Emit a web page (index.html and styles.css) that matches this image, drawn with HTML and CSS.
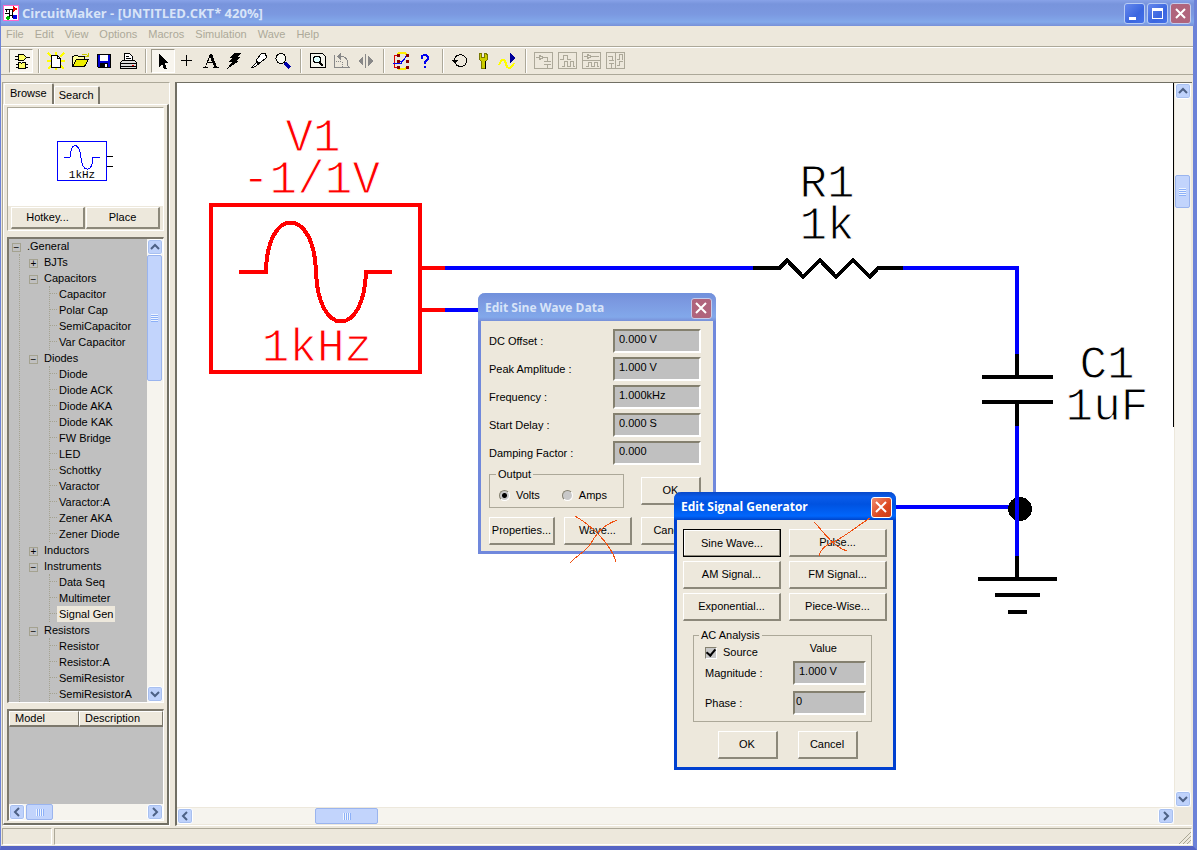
FILE: index.html
```html
<!DOCTYPE html>
<html lang="en">
<head>
<meta charset="utf-8">
<title>CircuitMaker - [UNTITLED.CKT* 420%]</title>
<link rel="stylesheet" href="styles.css">
</head>
<body>
<div class="app">
  <header class="titlebar">
    <svg class="app-icon" width="16" height="16" viewBox="0 0 16 16" shape-rendering="crispEdges"><rect x=".5" y=".5" width="15" height="15" fill="#fff" stroke="#f6c"/><path d="M2 4h8M2 8h4v-4M6 8v5M6 10h3v2h2M9 4v8M3 4v3" stroke="#000" fill="none"/><path d="M10 1l5 3-5 3z" fill="#e00"/><circle cx="12" cy="12" r="2.500" fill="#00d"/><circle cx="5" cy="13" r="1.800" fill="#0b0"/></svg>
    <h1 class="title">CircuitMaker - [UNTITLED.CKT* 420%]</h1>
    <div class="win-buttons">
      <button class="win-btn" aria-label="Minimize"><svg width="19" height="19" viewBox="0 0 19 19"><path d="M4 13h7v3H4z" fill="#fff"/></svg></button>
      <button class="win-btn" aria-label="Maximize"><svg width="19" height="19" viewBox="0 0 19 19"><path d="M4 4h11v11H4zM5 7v7h9V7z" fill="#fff" fill-rule="evenodd"/></svg></button>
      <button class="win-btn close dim" aria-label="Close"><svg width="19" height="19" viewBox="0 0 19 19"><path d="M5 5l9 9M14 5l-9 9" stroke="#fff" stroke-width="2"/></svg></button>
    </div>
  </header>

  <nav class="menubar">
    <button>File</button><button>Edit</button><button>View</button><button>Options</button><button>Macros</button><button>Simulation</button><button>Wave</button><button>Help</button>
  </nav>

  <div class="toolbar">
    <button class="tool pressed" aria-label="Parts"><svg viewBox="0 0 24 24"><path d="M6 7h4M6 10h4M17 8.500h4M7 15h12M7 18h12" stroke="#000"/><path d="M9.500 5.500h5l3 3-3 3h-5z" fill="#ff6" stroke="#000"/><path d="M9.500 13.500h2l1 1 1-1h3v6h-7z" fill="#ff6" stroke="#000"/></svg></button>
    <span class="sep"></span>
    <button class="tool" aria-label="New"><svg viewBox="0 0 24 24"><path d="M4 4l4 4M12 3v4M20 4l-4 4M3 12h4M17 12h4M4 20l4-4M20 20l-4-4M12 18v3" stroke="#ff0" stroke-width="2"/><path d="M7.500 6.500h6l3 3v9h-9z" fill="#fff" stroke="#000"/><path d="M13.500 6.500v3h3" fill="none" stroke="#000"/></svg></button>
    <button class="tool" aria-label="Open"><svg viewBox="0 0 24 24"><path d="M4.500 17.500v-10h1l1-1h3l1 1h6v3" fill="#ff9" stroke="#000"/><path d="M4.500 17.500l4-7h12l-4 7z" fill="#ee0" stroke="#000"/><path d="M14 5h4l2 2M20 4v3h-3" fill="none" stroke="#cc0"/></svg></button>
    <button class="tool" aria-label="Save"><svg viewBox="0 0 24 24"><path d="M5.500 5.500h13v13h-12l-1-1z" fill="#00c" stroke="#000"/><path d="M8 6h8v6H8z" fill="#fff"/><path d="M8 14h8v5H8z" fill="#000"/><path d="M13 15h2v3h-2z" fill="#fff"/></svg></button>
    <button class="tool" aria-label="Print"><svg viewBox="0 0 24 24"><path d="M8.500 11.500v-7h5l3 3v4" fill="#fff" stroke="#000"/><path d="M10 7h3M10 9h5" stroke="#000"/><path d="M6.500 11.500h12l2 2v6h-16v-6z" fill="#ddd" stroke="#000"/><path d="M4 14.500h16M4 17.500h16" stroke="#000"/><path d="M16 16h2" stroke="#e00"/></svg></button>
    <span class="sep"></span>
    <button class="tool pressed" aria-label="Arrow"><svg viewBox="0 0 24 24"><path d="M8 5v13l3-3 2 5h3l-2-6h4z" fill="#000"/></svg></button>
    <button class="tool" aria-label="Wire"><svg viewBox="0 0 24 24"><path d="M6 11.500h11M11.500 6v11" stroke="#000"/></svg></button>
    <button class="tool" aria-label="Text"><svg viewBox="0 0 24 24"><path d="M11 5h2l5 13h2v1h-6v-1h1l-1-4H8l-1 4h2v1H4v-1h2zM11 8l-2 5h4z" fill="#000" fill-rule="evenodd"/></svg></button>
    <button class="tool" aria-label="Delete"><svg viewBox="0 0 24 24"><path d="M11 4h8l-5 4h4l-5 4h3L4 20l5-7H5l4-4H7z" fill="#000"/></svg></button>
    <button class="tool" aria-label="Probe"><svg viewBox="0 0 24 24"><path d="M4.500 18.500l6-6 2 2-6 4zM9.500 10.500l5-6 4 0 1 4-6 5-3 1-1-2z" fill="#fff" stroke="#000"/></svg></button>
    <button class="tool" aria-label="Zoom"><svg viewBox="0 0 24 24"><path d="M14 14l5 5" stroke="#00a" stroke-width="3"/><circle cx="10" cy="9.500" r="5" fill="#f8f8f0" stroke="#000"/></svg></button>
    <span class="sep"></span>
    <button class="tool" aria-label="Fit"><svg viewBox="0 0 24 24"><path d="M4.500 4.500h12l3 3v11h-15z" fill="#f4f4ec" stroke="#000"/><circle cx="11" cy="10.500" r="3.500" fill="#dff" stroke="#000"/><path d="M13 13l4 4" stroke="#000" stroke-width="2"/></svg></button>
    <button class="tool" aria-label="Rotate"><svg viewBox="0 0 24 24"><path d="M4.500 6v12.500h15M8 7.500h5c3 1 5 4 5 9v2" stroke="#888" fill="none"/><path d="M11 4v7l-4-3.500z" fill="#888"/><path d="M6 12.500h6v6" stroke="#888" stroke-dasharray="1" fill="none"/></svg></button>
    <button class="tool" aria-label="Mirror"><svg viewBox="0 0 24 24"><path d="M4 12l5-5v10zM19 12l-5-5v10z" fill="#888"/><path d="M11.500 5v14" stroke="#888"/></svg></button>
    <span class="sep"></span>
    <button class="tool" aria-label="Digital display"><svg viewBox="0 0 24 24"><path d="M8 6l2-2h6l2 2M8 18l2 2h6l2-2" stroke="#fe0" stroke-width="2" fill="none"/><path d="M9 6.500H5.500v12h4" stroke="#d00" fill="none"/><path d="M4 14.500h8l6-8M10 12.500h3l5-6" stroke="#00e" fill="none"/><path d="M8 5h3v3H8zM17 5h3v3h-3zM8 11h3v3H8zM17 11h3v3h-3zM8 17h3v3H8zM17 17h3v3h-3z" fill="#800"/></svg></button>
    <button class="tool" aria-label="Help"><svg viewBox="0 0 24 24"><path d="M9 10V7l2-1h2l2 2v2l-3 3v2M12 17v2" stroke="#00e" stroke-width="2" fill="none"/></svg></button>
    <span class="sep"></span>
    <button class="tool" aria-label="Reset"><svg viewBox="0 0 24 24"><path d="M6.500 11c0-7 12-7 12 .500s-9 7-11 3" stroke="#000" fill="none"/><path d="M3 11h7l-3 4z" fill="#000"/></svg></button>
    <button class="tool" aria-label="Setup"><svg viewBox="0 0 24 24"><path d="M7.500 4.500h2v4h3v-4h2l1 2v4l-2 2v7h-4v-7l-2-2v-4z" fill="#cc0" stroke="#770"/><path d="M13.500 12v8" stroke="#000"/></svg></button>
    <button class="tool" aria-label="Run"><svg viewBox="0 0 24 24"><path d="M3 16c3-8 6-5 7-1s4 7 8-1" stroke="#ff0" stroke-width="2" fill="none"/><path d="M14 4l6 5-6 5z" fill="#009"/></svg></button>
    <span class="sep"></span>
    <button class="tool off" aria-label="Schematic" disabled><svg viewBox="0 0 24 24"><path d="M3.500 3.500h18v16h-18zM5 8.500h3M8.500 6.500v4l4-2zM12 8.500h4v4M13 12.500h7M13 15.500h7M16.500 15v4"/></svg></button>
    <button class="tool off" aria-label="Waveforms" disabled><svg viewBox="0 0 24 24"><path d="M3.500 3.500h18v16h-18zM5 10.500h3v-4h4v4h4M7 17.500h2v-5h3v5h3v-5h3v5h2"/></svg></button>
    <button class="tool off" aria-label="Split horizontal" disabled><svg viewBox="0 0 24 24"><path d="M3.500 3.500h18v16h-18zM5 7.500h3M8.500 5.500v4l4-2zM12 7.500h8M3 11.500h18M7 17.500h2v-4h3v4h3v-4h3v4h2"/></svg></button>
    <button class="tool off" aria-label="Split vertical" disabled><svg viewBox="0 0 24 24"><path d="M3.500 3.500h18v16h-18zM12.500 3v16M5 7.500h4v4M6 11.500h5M6 14.500h5M8.500 15v4M14 10.500h2v-5h3v5M14 16.500h2v-4h4"/></svg></button>
  </div>

  <main class="workspace">
    <aside class="side">
      <div class="tabs" role="tablist">
        <button class="tab active" role="tab" aria-selected="true">Browse</button><button class="tab" role="tab" aria-selected="false">Search</button>
      </div>
      <div class="tab-page">
        <section class="preview">
          <div class="preview-view">
            <svg width="58" height="42" viewBox="0 0 58 42"><g fill="none" shape-rendering="crispEdges"><path d="M.5 1.500h49v39H.5z" stroke="#00f"/><path d="M7 17.500h6c1-16 9-16 11 0s11 15 12 0h7" stroke="#00f"/><path d="M50 16.500h6M50 26.500h6" stroke="#000"/></g><text class="part-label" x="25" y="38" text-anchor="middle">1kHz</text></svg>
          </div>
          <div class="preview-actions"><button class="btn">Hotkey...</button><button class="btn">Place</button></div>
        </section>

        <section class="tree-box">
          <ul class="tree">
            <li class="node"><span class="box">−</span>.General
              <ul>
                <li class="node"><span class="box">+</span>BJTs</li>
                <li class="node"><span class="box">−</span>Capacitors
                  <ul><li class="leaf">Capacitor</li><li class="leaf">Polar Cap</li><li class="leaf">SemiCapacitor</li><li class="leaf">Var Capacitor</li></ul></li>
                <li class="node"><span class="box">−</span>Diodes
                  <ul><li class="leaf">Diode</li><li class="leaf">Diode ACK</li><li class="leaf">Diode AKA</li><li class="leaf">Diode KAK</li><li class="leaf">FW Bridge</li><li class="leaf">LED</li><li class="leaf">Schottky</li><li class="leaf">Varactor</li><li class="leaf">Varactor:A</li><li class="leaf">Zener AKA</li><li class="leaf">Zener Diode</li></ul></li>
                <li class="node"><span class="box">+</span>Inductors</li>
                <li class="node"><span class="box">−</span>Instruments
                  <ul><li class="leaf">Data Seq</li><li class="leaf">Multimeter</li><li class="leaf"><span class="selected">Signal Gen</span></li></ul></li>
                <li class="node"><span class="box">−</span>Resistors
                  <ul><li class="leaf">Resistor</li><li class="leaf">Resistor:A</li><li class="leaf">SemiResistor</li><li class="leaf">SemiResistorA</li></ul></li>
              </ul>
            </li>
          </ul>
          <div class="scroll vertical">
            <button class="scroll-btn" aria-label="Scroll up"><svg viewBox="0 0 16 16"><path d="M4 10l4-4 4 4"/></svg></button>
            <div class="track"><div class="thumb tree-thumb"></div></div>
            <button class="scroll-btn" aria-label="Scroll down"><svg viewBox="0 0 16 16"><path d="M4 6l4 4 4-4"/></svg></button>
          </div>
        </section>

        <section class="models">
          <table class="model-table"><thead><tr><th class="col-model">Model</th><th>Description</th></tr></thead></table>
          <div class="scroll horizontal">
            <button class="scroll-btn" aria-label="Scroll left"><svg viewBox="0 0 16 16"><path d="M10 4L6 8l4 4"/></svg></button>
            <div class="track"><div class="thumb model-thumb"></div></div>
            <button class="scroll-btn" aria-label="Scroll right"><svg viewBox="0 0 16 16"><path d="M6 4l4 4-4 4"/></svg></button>
          </div>
        </section>
      </div>
    </aside>

    <section class="editor">
      <div class="canvas">
        <svg class="schematic" width="998" height="725" viewBox="177 83 998 725">
          <g fill="none" stroke-width="4">
            <path d="M445 268H753M903 268H1017V354M445 310H600M1017 426V556M880 507H1010" stroke="#00f"/>
            <path d="M211 205h209v167H211zM239 272h27c1-66 48-66 50 0s48 66 50 0h26M421 268h24M421 310h24" stroke="#f00"/>
            <path d="M753 268h27l7-8 16 17 17-17 16 17 17-17 17 17 8-9h25M1017 354v23M982 377h71M982 402h71M1017 402v24M1017 555v24M978 579h79M995 595h45M1008 612h19" stroke="#000"/>
          </g>
          <circle cx="1020" cy="509" r="12"/>
          <path d="M1017 426V556" stroke="#00f" stroke-width="4"/>
          <path d="M1173.500 83V427" stroke="#000"/>
          <g class="sch-text" text-anchor="middle">
            <text class="red" x="313" y="151">V1</text>
            <text class="red" x="311" y="193">-1/1V</text>
            <text class="red" x="317" y="361">1kHz</text>
            <text x="827" y="197">R1</text>
            <text x="827" y="239">1k</text>
            <text x="1107" y="378">C1</text>
            <text x="1107" y="420">1uF</text>
          </g>
        </svg>

        <div class="dialog sine" role="dialog" aria-label="Edit Sine Wave Data">
          <div class="dialog-title"><h2>Edit Sine Wave Data</h2><button class="win-btn close dim" aria-label="Close"><svg width="19" height="19" viewBox="0 0 19 19"><path d="M4 4l10 10M14 4L4 14" stroke="#fff" stroke-width="2"/></svg></button></div>
          <form class="dialog-body sine-body">
            <div class="fields">
              <label for="dc">DC Offset :</label><input id="dc" value="0.000 V">
              <label for="peak">Peak Amplitude :</label><input id="peak" value="1.000 V">
              <label for="freq">Frequency :</label><input id="freq" value="1.000kHz">
              <label for="delay">Start Delay :</label><input id="delay" value="0.000 S">
              <label for="damp">Damping Factor :</label><input id="damp" value="0.000">
            </div>
            <div class="output-row">
              <fieldset class="output"><legend>Output</legend><label><input type="radio" name="out" checked>Volts</label><label><input type="radio" name="out">Amps</label></fieldset>
              <button type="button" class="btn small">OK</button>
            </div>
            <div class="button-row"><button type="button" class="btn props">Properties...</button><button type="button" class="btn wave">Wave...</button><button type="button" class="btn small">Cancel</button></div>
          </form>
          <svg class="mark mark-wave" width="50" height="48" viewBox="0 0 50 48"><path d="M6 0C23 10 42 28 47 46M48 4C28 12 26 22 20 30S10 37 1 47"/></svg>
        </div>

        <div class="dialog siggen" role="dialog" aria-label="Edit Signal Generator">
          <div class="dialog-title"><h2>Edit Signal Generator</h2><button class="win-btn close" aria-label="Close"><svg width="19" height="19" viewBox="0 0 19 19"><path d="M4 4l10 10M14 4L4 14" stroke="#fff" stroke-width="2"/></svg></button></div>
          <form class="dialog-body siggen-body">
            <div class="wave-grid">
              <button type="button" class="btn default">Sine Wave...</button><button type="button" class="btn">Pulse...</button>
              <button type="button" class="btn">AM Signal...</button><button type="button" class="btn">FM Signal...</button>
              <button type="button" class="btn">Exponential...</button><button type="button" class="btn">Piece-Wise...</button>
            </div>
            <fieldset class="analysis"><legend>AC Analysis</legend>
              <div class="analysis-head"><label><input type="checkbox" checked>Source</label><span>Value</span></div>
              <div class="analysis-fields">
                <label for="mag">Magnitude :</label><input id="mag" value="1.000 V">
                <label for="phase">Phase :</label><input id="phase" class="flush" value="0">
              </div>
            </fieldset>
            <div class="confirm"><button type="button" class="btn small">OK</button><button type="button" class="btn small">Cancel</button></div>
          </form>
          <svg class="mark mark-pulse" width="58" height="42" viewBox="0 0 58 42"><path d="M1 4C11 14 19 28 34 33M57 0C44 8 32 19 20 24C11 28 8 31 6 38"/></svg>
        </div>
      </div>
      <div class="scroll vertical edge">
        <button class="scroll-btn" aria-label="Scroll up"><svg viewBox="0 0 16 16"><path d="M4 10l4-4 4 4"/></svg></button>
        <div class="track"><div class="thumb canvas-vthumb"></div></div>
        <button class="scroll-btn" aria-label="Scroll down"><svg viewBox="0 0 16 16"><path d="M4 6l4 4 4-4"/></svg></button>
      </div>
      <div class="scroll horizontal">
        <button class="scroll-btn" aria-label="Scroll left"><svg viewBox="0 0 16 16"><path d="M10 4L6 8l4 4"/></svg></button>
        <div class="track"><div class="thumb canvas-hthumb"></div></div>
        <button class="scroll-btn" aria-label="Scroll right"><svg viewBox="0 0 16 16"><path d="M6 4l4 4-4 4"/></svg></button>
      </div>
    </section>
  </main>

  <footer class="status"><div class="cell first"></div><div class="cell rest"><svg width="12" height="12" viewBox="0 0 12 12"><path d="M0 12L12 0M4 12l8-8M8 12l4-4" stroke="#aaa794"/></svg></div></footer>
</div>
</body>
</html>
```
FILE: styles.css
```css
* { box-sizing: border-box; }
body { margin: 0; font: 11px/13px "Liberation Sans", sans-serif; color: #000; }
button, input { font: inherit; color: inherit; margin: 0; }
h1, h2 { margin: 0; }
ul { list-style: none; margin: 0; padding: 0; }
svg { display: block; }

.app {
  height: 100vh; display: flex; flex-direction: column;
  background: #ede8dc; border: solid #6c82d8; border-width: 0 4px 4px 1px;
  border-bottom-color: #5564c4;
}

.titlebar {
  height: 26px; flex: none; display: flex; align-items: center; gap: 3px;
  padding: 0 3px 0 2px; margin-right: -1px;
  background: linear-gradient(#88a2e8 0, #7894dc 4px, #7b98e0 14px, #82a8ea 22px, #7890d8 26px);
}
.title { flex: 1; font: bold 13px/16px "Open Sans", sans-serif; color: #d8e4f8; }
.win-buttons { display: flex; gap: 2px; }
.win-btn {
  width: 21px; height: 21px; padding: 0; border: 1px solid #b8ccf4; border-radius: 3px;
  background: linear-gradient(135deg, #6688ec, #3a66e0 60%, #4470e8);
}
.win-btn.close { background: linear-gradient(135deg, #f08c70, #dc4820 60%, #c83c18); border-color: #fff; }
.win-btn.close.dim { background: #b0647c; border-color: #c4ccec; }

.menubar { height: 21px; flex: none; display: flex; gap: 11px; padding: 0 5px 3px; border-bottom: 1px solid #aca899; }
.menubar button { border: 0; padding: 0; background: none; color: #aca899; }

.toolbar {
  height: 28px; flex: none; display: flex; align-items: center; padding: 0 8px;
  border-top: 1px solid #fff; border-bottom: 1px solid #aca899;
}
.tool { width: 24px; height: 24px; flex: none; padding: 0; border: 1px solid transparent; background: none; }
.tool svg { width: 24px; height: 24px; margin: -1px; shape-rendering: crispEdges; }
.tool.pressed { background: #f8f5ee; border-color: #9c988a #fff #fff #9c988a; }
.tool.off svg { fill: none; stroke: #aca899; }
.sep { width: 2px; height: 24px; margin: 0 4px 0 5px; border-left: 1px solid #aca899; border-right: 1px solid #fff; }

.workspace { flex: 1; min-height: 0; display: flex; gap: 5px; margin-top: 7px; padding: 0 1px 0 1px; }

.side { width: 168px; flex: none; display: flex; flex-direction: column; border: 1px solid; border-color: #aca899 #fff #fff #aca899; }
.tabs { display: flex; align-items: end; height: 21px; flex: none; padding-left: 1px; }
.tab {
  height: 18px; padding: 0 4px; border: 1px solid; border-width: 1px 2px 0 1px;
  border-color: #fff #7c786c #fff #fff; border-radius: 2px 2px 0 0; background: #ede8dc;
}
.tab.active { height: 21px; padding: 0 5px 2px; }
.tab-page {
  flex: 1; min-height: 0; display: flex; flex-direction: column; gap: 6px; padding: 2px 3px 2px 3px;
  border: 1px solid; border-color: #fff #716f64 #716f64 #fff; border-width: 1px 2px 2px 1px;
}

.preview { height: 124px; flex: none; display: flex; flex-direction: column; border: 1px solid; border-color: #aca899 #fff #fff #aca899; }
.preview-view { flex: 1; display: grid; place-items: center; background: #fff; padding-top: 8px; }
.part-label { font: 11px "Liberation Mono", monospace; }
.preview-actions { display: flex; gap: 1px; padding: 1px 3px; }
.preview-actions .btn { flex: 1; height: 22px; }

.btn {
  padding: 0; background: #ede8dc; border: solid; border-width: 1px 2px 2px 1px;
  border-color: #fff #8c887a #8c887a #fff; white-space: nowrap;
}

.tree-box { flex: 1; min-height: 0; display: flex; background: #c0c0c0; border: solid; border-width: 2px 1px 1px 2px; border-color: #7c786c #fff #fff #7c786c; }
.tree { flex: 1; overflow: hidden; line-height: 16px; padding-left: 3px; white-space: nowrap; margin-top: -1px; }
.tree ul { margin-left: 16px; }
.tree > .node > ul { margin-left: 7px; padding-left: 9px; border-left: 1px dotted #a4a290; }
.box {
  display: inline-block; width: 9px; height: 9px; margin: 0 6px 0 0; vertical-align: -1px;
  border: 1px solid #a4a290; text-align: center; line-height: 7px; font-size: 10px;
}
.tree > .node > ul > .node > ul { margin-left: 20px; padding-left: 0; border-left: 1px dotted #a4a290; }
.leaf::before { content: ""; display: inline-block; width: 7px; margin-right: 2px; vertical-align: 4px; border-top: 1px dotted #a4a290; }
.selected { display: inline-block; background: #ede8dc; padding: 0 2px; margin-left: -2px; }

.scroll { display: flex; background: #f6f4ee; }
.scroll.vertical { width: 16px; flex: none; flex-direction: column; }
.scroll.horizontal { height: 16px; flex: none; }
.scroll-btn { width: 16px; height: 16px; flex: none; padding: 0; border: 1px solid #fff; border-radius: 3px; background: #bfd2fb; box-shadow: inset 0 0 0 1px #a8c0f0; }
.scroll-btn svg { width: 16px; height: 16px; margin: -1px; fill: none; stroke: #4d6185; stroke-width: 2; }
.track { flex: 1; min-width: 0; min-height: 0; }
.thumb { border: 1px solid #9ab4ee; border-radius: 2px; background-color: #c2d4fc; background-repeat: no-repeat; background-position: center; }
.vertical .thumb { width: 15px; background-image: repeating-linear-gradient(#eef4fe 0 1px, #8cb0f8 1px 2px); background-size: 7px 8px; }
.horizontal .thumb { height: 16px; background-image: repeating-linear-gradient(90deg, #eef4fe 0 1px, #8cb0f8 1px 2px); background-size: 8px 7px; }
.tree-thumb { height: 126px; }
.model-thumb { width: 27px; margin-left: 1px; }
.canvas-vthumb { height: 33px; margin-top: 76px; }
.canvas-hthumb { width: 63px; margin-left: 122px; }

.models { height: 112px; flex: none; display: flex; flex-direction: column; justify-content: space-between; background: #c0c0c0; border: solid; border-width: 2px 1px 1px 2px; border-color: #7c786c #fff #fff #7c786c; }
.model-table { width: 100%; border-collapse: separate; border-spacing: 0; table-layout: fixed; }
.model-table th { height: 16px; padding: 0 5px; font-weight: normal; text-align: left; background: #ede8dc; border: solid; border-width: 1px 1px 2px 1px; border-color: #fff #7c786c #7c786c #fff; }
.model-table .col-model { width: 70px; }

.editor {
  flex: 1; min-width: 0; display: grid; grid-template: 1fr 18px / 1fr 18px;
  border: solid; border-width: 1px 0 1px 2px; border-color: #716f64 #fff #fff #716f64;
}
.editor > .horizontal { margin: 1px 0; }
.editor > .edge { margin: 0 1px; }
.canvas { position: relative; overflow: hidden; background: #fff; }
.schematic { position: absolute; left: 0; top: 0; shape-rendering: crispEdges; }
.sch-text { font: 46px "Liberation Mono", monospace; fill: #000; stroke: #fff; stroke-width: 1; }
.sch-text .red { fill: #f00; }

.dialog { position: absolute; display: flex; flex-direction: column; background: #ede8dc; border: solid #7088dc; border-width: 0 3px 3px; border-radius: 7px 7px 0 0; }
.sine { left: 301px; top: 210px; width: 238px; }
.siggen { left: 497px; top: 409px; width: 222px; border-color: #0040d0; }
.dialog-title {
  height: 28px; margin: 0 -3px; padding: 2px 4px 0 7px; display: flex; align-items: center; justify-content: space-between;
  border-radius: 7px 7px 0 0; color: #d8e4f8; background: linear-gradient(#7090dc, #7b98e0 8px, #82a8ea 24px, #7890d8);
}
.dialog-title h2 { font: bold 12px/16px "Open Sans", sans-serif; }
.siggen .dialog-title { color: #fff; background: linear-gradient(#0848c8, #0a5cea 5px, #0052e0 12px, #0066fc 24px, #0044c8); }
.dialog-body { display: flex; flex-direction: column; }
.dialog .btn { height: 28px; }
.dialog .small { width: 60px; }
.dialog .default { border: 1px solid #000; box-shadow: inset -1px -1px #8c887a, inset 1px 1px #fff; }
.dialog input:not([type]) {
  width: 100%; min-width: 0; height: 24px; padding: 0 4px 4px; border-radius: 0; background: #c0c0c0;
  border: 2px solid; border-color: #84806f #fff #fff #84806f;
}
.dialog input.flush { padding-left: 1px; }
fieldset { margin: 0; border: 1px solid #aca899; min-width: 0; }
legend { padding: 0 2px; }

.sine-body { padding: 8px 12px 6px 8px; }
.fields { display: grid; grid-template-columns: 1fr 88px; row-gap: 4px; align-items: center; }
.output-row { display: flex; justify-content: space-between; align-items: end; margin: 3px 0 9px; }
.output-row .btn { margin-bottom: 3px; }
.output { width: 135px; height: 40px; padding: 8px 9px 0; display: flex; gap: 22px; }
.output legend { margin-left: -3px; }
.output label { display: flex; align-items: center; gap: 6px; height: 13px; }
input[type="radio"] { appearance: none; width: 11px; height: 11px; border-radius: 6px; background: #c8c8c8; border: 1px solid; border-color: #84806f #fff #fff #84806f; }
input[type="radio"]:checked { background: radial-gradient(#000 2px, #c8c8c8 3px); }
.button-row { display: flex; justify-content: space-between; }
.props { width: 66px; }
.wave { width: 68px; }

.siggen-body { padding: 9px 6px 8px; }
.wave-grid { display: grid; grid-template-columns: 1fr 1fr; gap: 4px 8px; }
.analysis { margin: 8px 15px 9px 10px; padding: 0 5px 6px 11px; }
.analysis legend { margin-left: -6px; }
.analysis-head { display: flex; justify-content: space-between; padding: 0 29px 0 0; margin-bottom: 2px; }
.analysis-head label { display: flex; align-items: center; gap: 6px; padding-top: 4px; }
.analysis-fields { display: grid; grid-template-columns: 1fr 73px; row-gap: 6px; align-items: center; }
input[type="checkbox"] {
  appearance: none; width: 12px; height: 12px; border: 1px solid; border-color: #84806f #fff #fff #84806f;
  background: #c8c8c8; display: grid; place-items: center;
}
input[type="checkbox"]:checked::after { content: ""; width: 4px; height: 7px; border: solid #000; border-width: 0 2px 2px 0; rotate: 40deg; margin-top: -2px; }
.confirm { display: flex; justify-content: center; gap: 20px; padding-left: 5px; }

.mark { position: absolute; overflow: visible; fill: none; stroke: #f05010; shape-rendering: crispEdges; }
.mark-wave { left: 88px; top: 223px; }
.mark-pulse { left: 136px; top: 26px; }

.status { height: 20px; flex: none; display: flex; gap: 2px; padding: 2px 1px 1px 1px; }
.cell { border: 1px solid; border-color: #aca899 #fff #fff #aca899; }
.first { width: 50px; }
.rest { flex: 1; display: flex; justify-content: end; align-items: end; }
```
